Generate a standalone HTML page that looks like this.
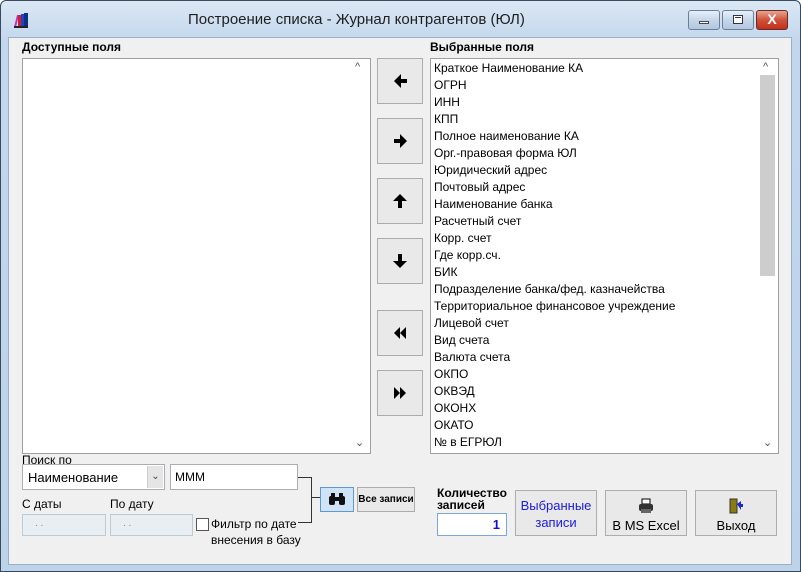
<!DOCTYPE html>
<html><head><meta charset="utf-8"><style>
*{box-sizing:border-box;margin:0;padding:0}
body{width:801px;height:572px;overflow:hidden;background:#fff;font-family:"Liberation Sans",Arial,sans-serif;font-size:12px;position:relative}
.a{position:absolute}
.win{left:0;top:0;width:801px;height:572px;border:1px solid #3a4a5c;border-radius:6px 6px 0 0;background:linear-gradient(#dbe8f5,#c3d7ec 40px,#bcd3ea);}
.client{left:8px;top:37px;width:784px;height:528px;background:#f0f0f0;border:1px solid #9ab0c8}
.title{left:188px;top:11px;font-size:15px;color:#1e1e1e;white-space:nowrap}
.tb{top:10px;height:20px;border:1px solid #6d7f95;border-radius:3px;background:linear-gradient(#e8f0f9,#c5d6ea 50%,#b2c7e0)}
.list{background:#fff;border:1px solid #a0a0a0}
.lbl{font-weight:bold;font-size:12px}
.btn{background:#e9e9e9;border:1px solid #adadad;text-align:center}
.item{left:434px;font-size:12px;color:#000;line-height:17px}
.sb{font-size:11px;color:#555}
.fld{background:#fff;border:1px solid #abadb3}
</style></head><body>
<div class="a win"></div>
<div class="a" style="left:12px;top:12px;width:20px;height:16px">
<svg width="20" height="16"><polygon points="2,15 5,3 7,3 4,15" fill="#c030c0"/><rect x="6" y="3" width="3" height="12" fill="#d02020"/><rect x="9" y="2" width="3" height="13" fill="#2040d0"/><rect x="12" y="1" width="4" height="14" fill="#103080"/><rect x="2" y="14" width="14" height="2" fill="#222"/></svg></div>
<div class="a title">Построение списка - Журнал контрагентов (ЮЛ)</div>
<div class="a tb" style="left:688px;width:32px"><div class="a" style="left:10px;top:10px;width:10px;height:3px;background:#fff;border:1px solid #445"></div></div>
<div class="a tb" style="left:722px;width:32px"><div class="a" style="left:10px;top:4px;width:10px;height:9px;border:1px solid #334;background:#fff;box-shadow:inset 0 0 0 1px #fff, inset 0 2px 0 #334"></div></div>
<div class="a tb" style="left:756px;width:32px;background:linear-gradient(#e8a493,#d0523a 50%,#c0301c);border-color:#6b2a20;color:#fff;font-weight:bold;text-align:center;font-size:14px;line-height:17px">X</div>
<div class="a client"></div>

<div class="a lbl" style="left:22px;top:40px">Доступные поля</div>
<div class="a lbl" style="left:430px;top:40px">Выбранные поля</div>

<div class="a list" style="left:22px;top:58px;width:349px;height:396px"></div>
<div class="a sb" style="left:355px;top:61px">&#94;</div>
<div class="a sb" style="left:355px;top:436px">&#8964;</div>

<div class="a list" style="left:430px;top:58px;width:349px;height:396px"></div>
<div class="a" style="left:760px;top:75px;width:15px;height:201px;background:#cdcdcd"></div>
<div class="a sb" style="left:763px;top:61px">&#94;</div>
<div class="a sb" style="left:763px;top:436px">&#8964;</div>

<div class="a item" style="top:60px">Краткое Наименование КА<br>ОГРН<br>ИНН<br>КПП<br>Полное наименование КА<br>Орг.-правовая форма ЮЛ<br>Юридический адрес<br>Почтовый адрес<br>Наименование банка<br>Расчетный счет<br>Корр. счет<br>Где корр.сч.<br>БИК<br>Подразделение банка/фед. казначейства<br>Территориальное финансовое учреждение<br>Лицевой счет<br>Вид счета<br>Валюта счета<br>ОКПО<br>ОКВЭД<br>ОКОНХ<br>ОКАТО<br>№ в ЕГРЮЛ</div>

<div class="a btn" style="left:377px;top:58px;width:46px;height:46px"><svg width="44" height="44"><polygon points="16,22 23,15 23,20 29,20 29,24 23,24 23,29" fill="#000"/></svg></div>
<div class="a btn" style="left:377px;top:118px;width:46px;height:46px"><svg width="44" height="44"><polygon points="29,22 22,15 22,20 16,20 16,24 22,24 22,29" fill="#000"/></svg></div>
<div class="a btn" style="left:377px;top:178px;width:46px;height:46px"><svg width="44" height="44"><polygon points="22,15 29,22 24,22 24,29 20,29 20,22 15,22" fill="#000"/></svg></div>
<div class="a btn" style="left:377px;top:238px;width:46px;height:46px"><svg width="44" height="44"><polygon points="22,29 29,22 24,22 24,15 20,15 20,22 15,22" fill="#000"/></svg></div>
<div class="a btn" style="left:377px;top:310px;width:46px;height:46px"><svg width="44" height="44"><polygon points="16,22 22,16 22,28" fill="#000"/><polygon points="22,22 28,16 28,28" fill="#000"/></svg></div>
<div class="a btn" style="left:377px;top:370px;width:46px;height:46px"><svg width="44" height="44"><polygon points="28,22 22,16 22,28" fill="#000"/><polygon points="22,22 16,16 16,28" fill="#000"/></svg></div>

<div class="a" style="left:22px;top:453px;font-size:12px">Поиск по</div>
<div class="a fld" style="left:22px;top:464px;width:143px;height:26px;padding:5px 0 0 5px;font-size:13px">Наименование</div>
<div class="a" style="left:147px;top:466px;width:16px;height:22px;background:#e5e5e5;border-left:1px solid #ccc;font-size:10px;text-align:center;line-height:22px;color:#444">&#8964;</div>
<div class="a fld" style="left:170px;top:464px;width:128px;height:26px;padding:5px 0 0 4px;font-size:12px">МММ</div>
<div class="a" style="left:298px;top:477px;width:14px;height:46px;border:1px solid #333;border-left:none"></div>
<div class="a" style="left:312px;top:497px;width:8px;height:1px;background:#333"></div>

<div class="a" style="left:320px;top:487px;width:34px;height:25px;background:#cfe4f6;border:1px solid #5d9bd3"><svg width="32" height="23"><g fill="#111"><rect x="10" y="5" width="4" height="4"/><rect x="18" y="5" width="4" height="4"/><rect x="8" y="8" width="6" height="9" rx="2"/><rect x="18" y="8" width="6" height="9" rx="2"/><rect x="13" y="9" width="6" height="4"/></g></svg></div>
<div class="a btn" style="left:357px;top:487px;width:58px;height:25px;font-size:10px;font-weight:bold;line-height:23px">Все записи</div>

<div class="a" style="left:22px;top:497px">С даты</div>
<div class="a" style="left:110px;top:497px">По дату</div>
<div class="a" style="left:22px;top:514px;width:84px;height:22px;background:#e9eef3;border:1px solid #bccbd8;color:#888;padding:3px 0 0 12px;font-size:10px">. .</div>
<div class="a" style="left:110px;top:514px;width:83px;height:22px;background:#e9eef3;border:1px solid #bccbd8;color:#888;padding:3px 0 0 12px;font-size:10px">. .</div>
<div class="a" style="left:196px;top:518px;width:13px;height:13px;background:#fff;border:1px solid #555"></div>
<div class="a" style="left:211px;top:516px;line-height:16px">Фильтр по дате<br>внесения в базу</div>

<div class="a lbl" style="left:437px;top:487px;line-height:12px">Количество<br>записей</div>
<div class="a fld" style="left:437px;top:513px;width:70px;height:23px;border:1px solid #7aa7d8;text-align:right;padding:3px 6px 0 0;font-weight:bold;color:#1010d0;font-size:13px">1</div>

<div class="a btn" style="left:515px;top:490px;width:82px;height:46px;color:#1a1ae0;font-size:13px;line-height:17px;padding-top:6px">Выбранные<br>записи</div>
<div class="a btn" style="left:605px;top:490px;width:82px;height:46px;font-size:13px"><div style="margin-top:7px;height:16px"><svg width="16" height="16"><rect x="4" y="1" width="8" height="5" fill="#fff" stroke="#000"/><rect x="1" y="6" width="14" height="7" rx="2" fill="#333"/><rect x="3" y="11" width="10" height="4" fill="#666"/></svg></div><div style="margin-top:4px">В MS Excel</div></div>
<div class="a btn" style="left:695px;top:490px;width:82px;height:46px;font-size:13px"><div style="margin-top:7px;height:16px"><svg width="16" height="16"><rect x="2" y="1" width="7" height="14" fill="#8a7a10" stroke="#333"/><polygon points="9,6 13,3 13,6 15,6 15,9 13,9 13,12" fill="#1a2ad0"/></svg></div><div style="margin-top:4px">Выход</div></div>
</body></html>
